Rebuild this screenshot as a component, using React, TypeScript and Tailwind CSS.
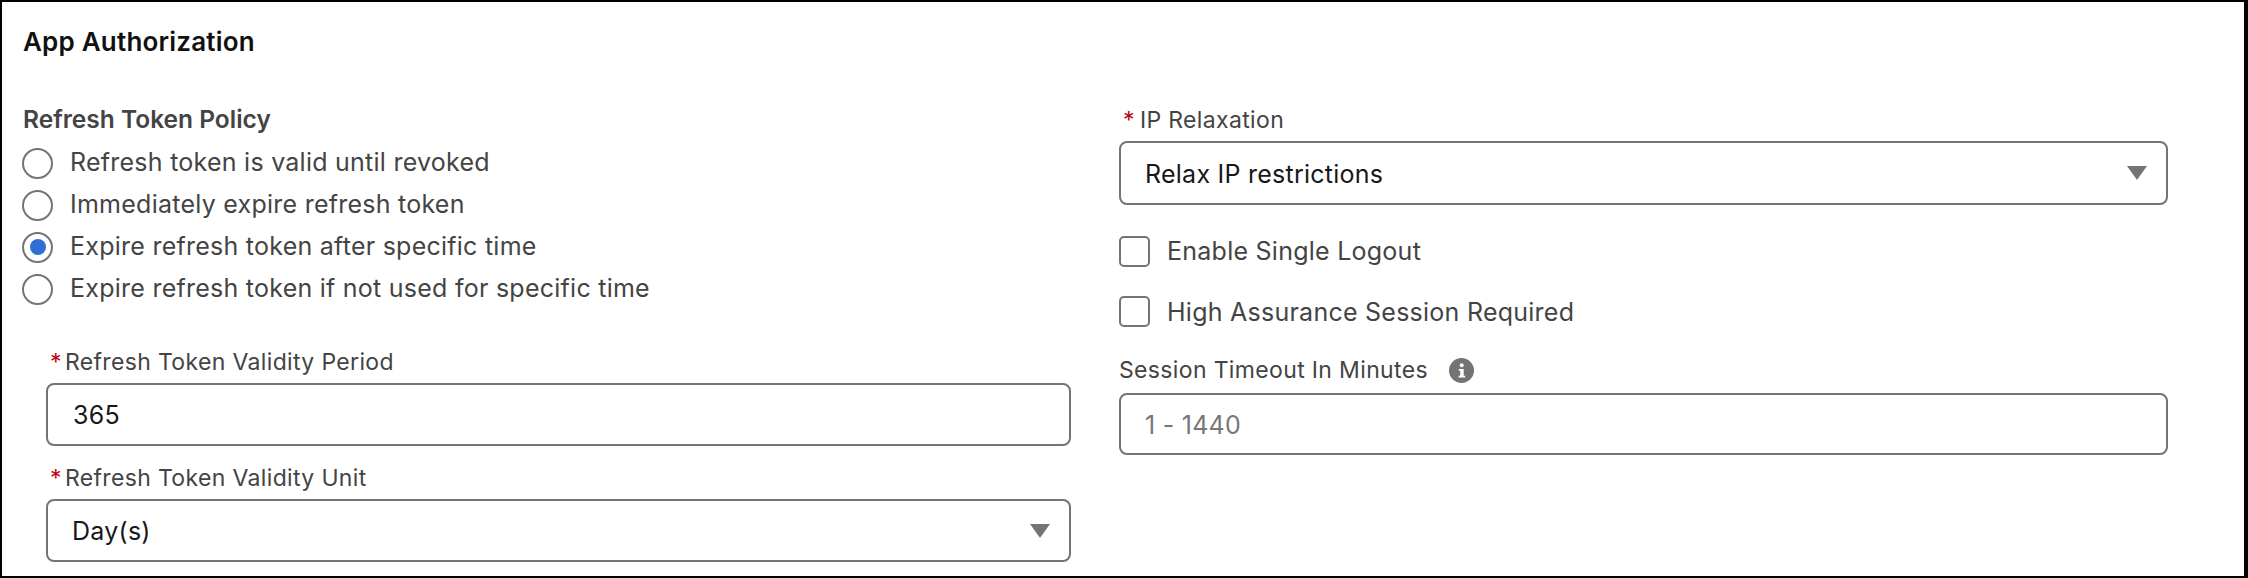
import React from 'react'

const radios = [
  { label: 'Refresh token is valid until revoked', checked: false },
  { label: 'Immediately expire refresh token', checked: false },
  { label: 'Expire refresh token after specific time', checked: true },
  { label: 'Expire refresh token if not used for specific time', checked: false },
]

const Star = () => <abbr className="text-[#ba0517] no-underline">*</abbr>

const Caret = () => (
  <svg className="absolute right-[19px] top-1/2 -translate-y-1/2" width="20" height="14" viewBox="0 0 20 14" aria-hidden="true">
    <path d="M0 0h20L10 14z" fill="#747474" />
  </svg>
)

const Field: React.FC<{ text: string; height: string; pad: string; select?: boolean; placeholder?: boolean }> = ({ text, height, pad, select, placeholder }) => (
  <div className={`relative flex items-center border-2 border-[#747474] rounded-lg bg-white text-[25px] tracking-[0.25px] pt-[3px] ${height} ${pad} ${placeholder ? 'text-[#777777]' : 'text-[#181818]'}`}>
    {text}
    {select && <Caret />}
  </div>
)

const Checkbox: React.FC<{ label: string; className: string }> = ({ label, className }) => (
  <label className={`flex items-center text-[25px] tracking-[0.25px] text-[#444444] ${className}`}>
    <span className="w-[31px] h-[31px] border-2 border-[#747474] rounded-[5px] bg-white shrink-0" />
    <span className="ml-[17px] pt-[2px]">{label}</span>
  </label>
)

const App: React.FC = () => {
  return (
    <div className="w-[2248px] h-[578px] bg-white border-t-2 border-l-2 border-b-2 border-r-4 border-black overflow-hidden font-['Inter','Liberation_Sans',sans-serif]">
      <h2 className="mt-[24px] ml-[21px] h-[32px] leading-[32px] text-[26px] tracking-[0.2px] font-semibold text-[#111111]">App Authorization</h2>
      <div className="flex mt-[46px]">
        {/* left column */}
        <div className="w-[1098px] shrink-0">
          <div className="ml-[21px] h-[30px] leading-[30px] text-[24.5px] font-semibold text-[#444444]">Refresh Token Policy</div>
          <div className="ml-[20px] mt-[8px]">
            {radios.map(r => (
              <label key={r.label} className="flex items-center h-[42px] text-[25px] tracking-[0.25px] text-[#444444]">
                <span className="flex items-center justify-center w-[31px] h-[31px] border-2 border-[#747474] rounded-full bg-white shrink-0">
                  {r.checked && <span className="w-[16px] h-[16px] rounded-full bg-[#2f70d2]" />}
                </span>
                <span className="ml-[17px]">{r.label}</span>
              </label>
            ))}
          </div>
          <div className="ml-[44px] w-[1025px]">
            <div className="mt-[36px] pl-[4px] h-[32px] leading-[32px] text-[23px] tracking-[0.35px] text-[#444444]"><Star /><span className="ml-[3px]">Refresh Token Validity Period</span></div>
            <div className="mt-[5px]"><Field text="365" height="h-[63px]" pad="pl-[25px]" /></div>
            <div className="mt-[16px] pl-[4px] h-[32px] leading-[32px] text-[23px] tracking-[0.35px] text-[#444444]"><Star /><span className="ml-[3px]">Refresh Token Validity Unit</span></div>
            <div className="mt-[5px]"><Field text="Day(s)" height="h-[63px]" pad="pl-[24px]" select /></div>
          </div>
        </div>
        {/* right column */}
        <div className="ml-[19px] w-[1049px] shrink-0">
          <div className="h-[32px] leading-[32px] text-[23px] tracking-[0.35px] text-[#444444]"><span className="ml-[4px]"><Star /></span><span className="ml-[5px]">IP Relaxation</span></div>
          <div className="mt-[5px]"><Field text="Relax IP restrictions" height="h-[64px]" pad="pl-[24px]" select /></div>
          <Checkbox label="Enable Single Logout" className="mt-[30px] h-[32px]" />
          <Checkbox label="High Assurance Session Required" className="mt-[29px] h-[31px]" />
          <div className="mt-[27px] h-[32px] flex items-center text-[23px] tracking-[0.35px] text-[#444444]">
            <span>Session Timeout In Minutes</span>
            <svg className="ml-[21px]" width="25" height="25" viewBox="0 0 25 25" aria-hidden="true">
              <circle cx="12.5" cy="12.5" r="12.5" fill="#747474" />
              <circle cx="12.7" cy="7.3" r="2" fill="#fff" />
              <path d="M9.8 11h4.9v6.8h1.5v1.8H9.6v-1.8h1.6v-5H9.8z" fill="#fff" />
            </svg>
          </div>
          <div className="mt-[7px]"><Field text="1 - 1440" height="h-[62px]" pad="pl-[24px]" placeholder /></div>
        </div>
      </div>
    </div>
  )
}

export default App
